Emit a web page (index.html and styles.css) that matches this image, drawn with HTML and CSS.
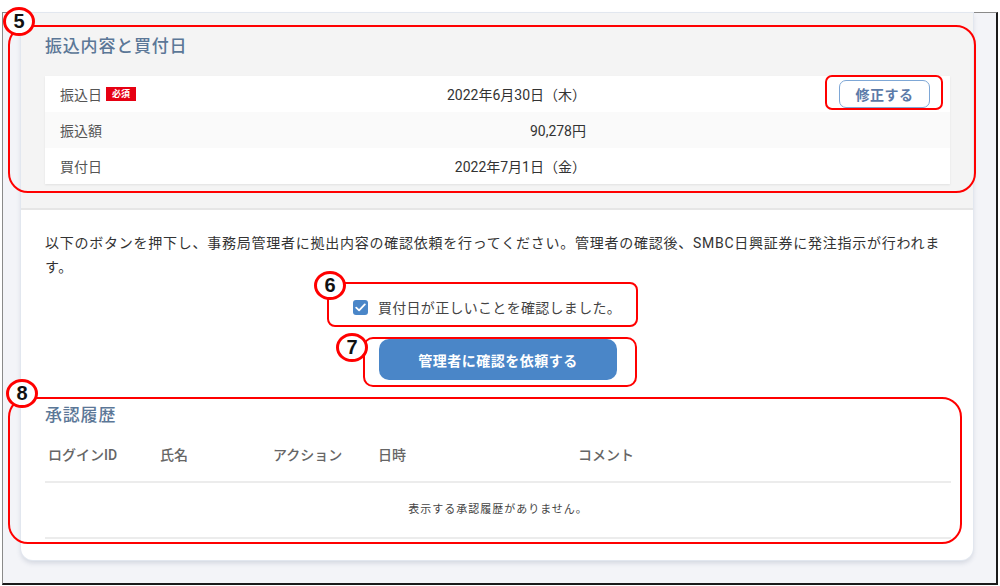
FILE: index.html
```html
<!DOCTYPE html>
<html lang="ja">
<head>
    <meta charset="UTF-8">
    <meta name="viewport" content="width=device-width, initial-scale=1.0">
    <title>振込内容と買付日</title>
    <link rel="stylesheet" href="styles.css">
</head>
<body>
    <div class="frame">
        <div class="card">
            <div class="card-head">
                <h2 class="section-title">振込内容と買付日</h2>
                <div class="detail-table">
                    <div class="detail-row">
                        <div class="detail-label">振込日<span class="badge">必須</span></div>
                        <div class="detail-value">2022年6月30日（木）</div>
                        <div class="detail-action"><button class="btn-outline" type="button">修正する</button></div>
                    </div>
                    <div class="detail-row alt">
                        <div class="detail-label">振込額</div>
                        <div class="detail-value">90,278円</div>
                        <div class="detail-action"></div>
                    </div>
                    <div class="detail-row">
                        <div class="detail-label">買付日</div>
                        <div class="detail-value">2022年7月1日（金）</div>
                        <div class="detail-action"></div>
                    </div>
                </div>
            </div>

            <div class="card-body">
                <p class="notice">以下のボタンを押下し、事務局管理者に拠出内容の確認依頼を行ってください。管理者の確認後、SMBC日興証券に発注指示が行われます。</p>

                <label class="confirm">
                    <span class="checkbox">
                        <svg width="11" height="9" viewBox="0 0 11 9"><path d="M1.2 4.6 L4.1 7.4 L9.8 1.4" fill="none" stroke="#fff" stroke-width="1.8" stroke-linecap="round" stroke-linejoin="round"/></svg>
                    </span>
                    買付日が正しいことを確認しました。
                </label>

                <div class="actions">
                    <button class="btn-primary" type="button">管理者に確認を依頼する</button>
                </div>

                <h2 class="section-title history-title">承認履歴</h2>
                <div class="history">
                    <div class="history-head">
                        <div>ログインID</div>
                        <div>氏名</div>
                        <div>アクション</div>
                        <div>日時</div>
                        <div>コメント</div>
                    </div>
                    <div class="history-empty">表示する承認履歴がありません。</div>
                </div>
            </div>
        </div>

        <!-- annotation overlays -->
        <div class="mark box-5"></div>
        <div class="mark box-edit"></div>
        <div class="mark box-6"></div>
        <div class="mark box-7"></div>
        <div class="mark box-8"></div>
        <div class="num num-5">5</div>
        <div class="num num-6">6</div>
        <div class="num num-7">7</div>
        <div class="num num-8">8</div>
    </div>
</body>
</html>
```

FILE: styles.css
```css
body {
    margin: 0;
    background: #fff;
    font-family: Roboto, "Noto Sans CJK JP", sans-serif;
    font-size: 14px;
    color: #333;
}
.frame {
    position: relative;
    box-sizing: border-box;
    margin: 12px 0 0 2px;
    width: 996px;
    height: 573px;
    border-top: 1px solid #8a8a8a;
    border-left: 1px solid #8a8a8a;
    border-right: 2px solid #1a1a1a;
    border-bottom: 2px solid #1a1a1a;
    background: #f3f4f8;
}
.card {
    margin-left: 18px;
    width: 952px;
    background: #fff;
    border-radius: 0 0 12px 12px;
    box-shadow: 0 0 0 1px #e2e7ef, 0 3px 5px rgba(60, 80, 110, 0.18);
}
.card-head {
    background: #f4f4f4;
    padding: 22px 23px 24px 24px;
    border-bottom: 2px solid #e6e6e6;
}
.section-title {
    margin: 0;
    font-size: 17px;
    line-height: 22px;
    font-weight: 500;
    letter-spacing: 0.8px;
    color: #5b7797;
}
.detail-table {
    margin-top: 19px;
    background: #fff;
    box-shadow: 0 1px 2px rgba(0, 0, 0, 0.08);
}
.detail-row {
    display: grid;
    grid-template-columns: 200px 326px 1fr;
    align-items: center;
    height: 36px;
    padding-left: 15px;
}
.detail-row.alt {
    background: #fafafa;
}
.detail-label {
    display: flex;
    align-items: center;
    color: #555;
}
.detail-value {
    text-align: right;
    color: #333;
}
.detail-action {
    display: flex;
    justify-content: flex-end;
    padding-right: 20px;
}
.badge {
    display: inline-block;
    margin-left: 4px;
    width: 30px;
    height: 14px;
    line-height: 14px;
    text-align: center;
    background: #e60012;
    color: #fff;
    font-size: 9px;
    font-weight: bold;
}
.btn-outline {
    width: 91px;
    height: 28px;
    padding: 0;
    background: #fff;
    border: 1.5px solid #7ea7d6;
    border-radius: 7px;
    color: #5b7aa8;
    font-family: inherit;
    font-size: 14px;
    font-weight: bold;
    letter-spacing: 0.5px;
}
.card-body {
    padding: 21px 22px 21px 24px;
}
.notice {
    margin: 0;
    line-height: 24px;
    letter-spacing: 0.75px;
    color: #333;
}
.confirm {
    display: flex;
    align-items: center;
    justify-content: center;
    margin-top: 16px;
    padding-right: 22px;
    height: 24px;
    color: #444;
    letter-spacing: 0.3px;
}
.checkbox {
    display: flex;
    align-items: center;
    justify-content: center;
    width: 15px;
    height: 15px;
    margin-right: 10px;
    border-radius: 3px;
    background: #4a86c8;
}
.actions {
    display: flex;
    justify-content: center;
    margin-top: 20px;
}
.btn-primary {
    width: 238px;
    height: 41px;
    border: none;
    border-radius: 10px;
    background: #4a86c8;
    color: #fff;
    font-family: inherit;
    font-size: 14px;
    font-weight: bold;
    letter-spacing: 0.5px;
}
.history-title {
    margin-top: 24px;
}
.history {
    margin-top: 12px;
}
.history-head {
    display: grid;
    grid-template-columns: 112px 113px 105px 200px 1fr;
    padding: 6px 0 15px 3px;
    line-height: 22px;
    font-weight: 500;
    color: #666;
    border-bottom: 2px solid #ececec;
}
.history-empty {
    height: 54px;
    line-height: 54px;
    text-align: center;
    font-size: 11px;
    letter-spacing: 1px;
    color: #444;
    border-bottom: 2px solid #ececec;
}

/* red annotation marks over the screenshot */
.mark {
    position: absolute;
    box-sizing: border-box;
    border: 2px solid #f00;
}
.box-5 { left: 5px; top: 12px; width: 968px; height: 168px; border-radius: 20px; }
.box-edit { left: 822px; top: 62px; width: 118px; height: 35px; border-radius: 7px; }
.box-6 { left: 324px; top: 269px; width: 311px; height: 45px; border-radius: 8px; }
.box-7 { left: 360px; top: 324px; width: 274px; height: 50px; border-radius: 10px; }
.box-8 { left: 5px; top: 384px; width: 954px; height: 147px; border-radius: 20px; }
.num {
    position: absolute;
    box-sizing: border-box;
    width: 32px;
    height: 29px;
    border: 3px solid #f00;
    border-radius: 50%;
    background: #fff;
    font-family: "Liberation Sans", Arial, sans-serif;
    font-size: 20px;
    font-weight: bold;
    line-height: 23px;
    text-align: center;
    color: #111;
}
.num-5 { left: 0; top: -6px; }
.num-6 { left: 311px; top: 258px; }
.num-7 { left: 333px; top: 320px; }
.num-8 { left: 3px; top: 366px; }
```
